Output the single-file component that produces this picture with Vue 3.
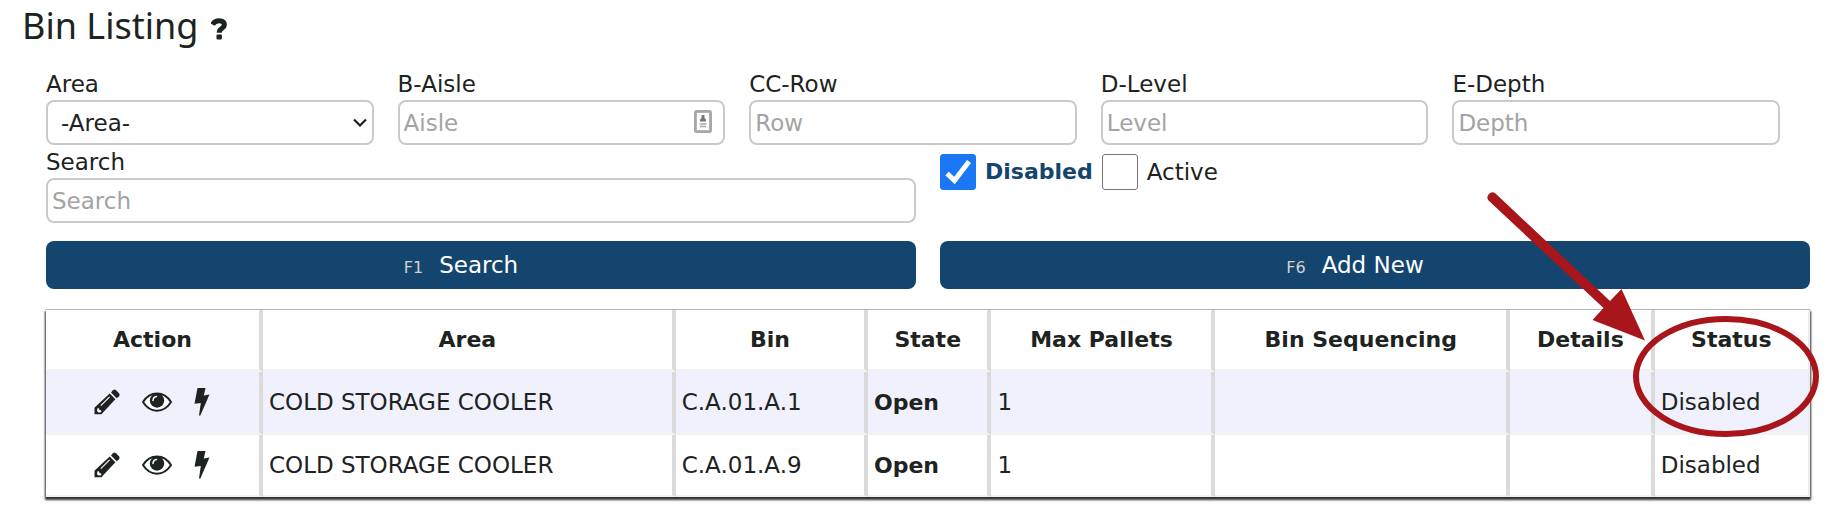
<script setup>
import { ref } from 'vue'

const area = ref('')
const showDisabled = ref(true)
const showActive = ref(false)

const filters = [
  { id: 'aisle', label: 'B-Aisle', placeholder: 'Aisle', card: true },
  { id: 'row', label: 'CC-Row', placeholder: 'Row' },
  { id: 'level', label: 'D-Level', placeholder: 'Level' },
  { id: 'depth', label: 'E-Depth', placeholder: 'Depth' }
]

const columns = ['Action', 'Area', 'Bin', 'State', 'Max Pallets', 'Bin Sequencing', 'Details', 'Status']

const bins = [
  { area: 'COLD STORAGE COOLER', bin: 'C.A.01.A.1', state: 'Open', max: 1, status: 'Disabled' },
  { area: 'COLD STORAGE COOLER', bin: 'C.A.01.A.9', state: 'Open', max: 1, status: 'Disabled' }
]
</script>

<template>
  <main class="page">
    <header class="head">
      <h1>Bin Listing</h1>
      <button type="button" class="help" aria-label="Help">
        <svg viewBox="0 0 16 22" width="16" height="22">
          <path d="M1.500 6.500C3 3.800 5 2.700 8 2.700C11.500 2.700 13.400 4.300 13.400 6.800C13.400 10.500 8.200 10.200 8.200 14.800" fill="none" stroke="currentColor" stroke-width="5" />
          <rect x="5.500" y="16.500" width="5.400" height="5" rx="1" fill="currentColor" />
        </svg>
      </button>
    </header>

    <form class="content" @submit.prevent>
      <div class="filters">
        <div class="field">
          <label for="area">Area</label>
          <div class="control">
            <select id="area" v-model="area">
              <option value="">-Area-</option>
            </select>
            <svg class="chevron" viewBox="0 0 14 9" width="14" height="9">
              <path d="M1 1.500L7 7.500L13 1.500" fill="none" stroke="#1c2321" stroke-width="2.200" />
            </svg>
          </div>
        </div>
        <div v-for="f in filters" :key="f.id" class="field">
          <label :for="f.id">{{ f.label }}</label>
          <div class="control">
            <input :id="f.id" type="text" :placeholder="f.placeholder" />
            <svg v-if="f.card" class="card" viewBox="0 0 18 23" width="18" height="23">
              <rect x="1" y="1" width="16" height="21" rx="1.500" fill="#fff" stroke="#a8a8a8" stroke-width="2" />
              <rect x="2.500" y="2.500" width="13" height="18" fill="none" stroke="#686868" stroke-dasharray="1 1" />
              <path d="M7.500 5h3v3l1.500 1.500v2h-6v-2L7.500 8z" fill="#777" />
              <path d="M5.500 14h7M6 16.500h6" stroke="#aaa" stroke-width="1.500" />
            </svg>
          </div>
        </div>
      </div>

      <div class="pair">
        <div class="field">
          <label for="search">Search</label>
          <div class="control">
            <input id="search" type="text" placeholder="Search" />
          </div>
        </div>
        <div class="checks">
          <label class="check" :class="{ on: showDisabled }">
            <input v-model="showDisabled" type="checkbox" />
            <svg v-if="showDisabled" class="tick" viewBox="0 0 36 36" width="36" height="36">
              <path d="M7 19.500L14.500 26.500L29 7.500" fill="none" stroke="#fff" stroke-width="5" />
            </svg>
            <span>Disabled</span>
          </label>
          <label class="check" :class="{ on: showActive }">
            <input v-model="showActive" type="checkbox" />
            <svg v-if="showActive" class="tick" viewBox="0 0 36 36" width="36" height="36">
              <path d="M7 19.500L14.500 26.500L29 7.500" fill="none" stroke="#fff" stroke-width="5" />
            </svg>
            <span>Active</span>
          </label>
        </div>
      </div>

      <div class="pair actions">
        <button type="submit" class="primary"><small>F1</small><span>Search</span></button>
        <button type="button" class="primary"><small>F6</small><span>Add New</span></button>
      </div>

      <table>
        <colgroup>
          <col class="c-action" /><col class="c-area" /><col class="c-bin" /><col class="c-state" />
          <col class="c-max" /><col class="c-seq" /><col class="c-details" /><col />
        </colgroup>
        <thead>
          <tr><th v-for="c in columns" :key="c" scope="col">{{ c }}</th></tr>
        </thead>
        <tbody>
          <tr v-for="b in bins" :key="b.bin">
            <td>
              <div class="tools">
                <button type="button" class="tool" aria-label="Edit">
                  <svg viewBox="0 0 26 26" width="26" height="26">
                    <path d="M2.500 16.800L15.700 4.600L21.400 10.300L9 23.500L7.500 25.300H0.500V18.800z" fill="currentColor" />
                    <path d="M17 3.400L19 1.200Q20.500 0 22 1.200L25 4.300Q26.200 5.800 25 7.200L22.700 9.200z" fill="currentColor" />
                    <path d="M3.600 19l1.400.4.500 1.600 1.600.5.300 1.200-1.200.9H4.600L3 22.200z" fill="#fff" />
                    <path d="M6.800 16.600L15.600 7.800" stroke="#fff" stroke-width="1.100" />
                  </svg>
                </button>
                <button type="button" class="tool" aria-label="View">
                  <svg viewBox="0 0 30 20" width="30" height="20">
                    <path d="M1 10C8 -1.500 22 -1.500 29 10C22 21.500 8 21.500 1 10z" fill="#fff" stroke="currentColor" stroke-width="2" />
                    <circle cx="15" cy="8.500" r="7.200" fill="currentColor" />
                    <path d="M11 8.500Q11.300 4.800 14.500 4.500" fill="none" stroke="#fff" stroke-width="1.500" stroke-linecap="round" />
                  </svg>
                </button>
                <button type="button" class="tool" aria-label="Quick action">
                  <svg viewBox="0 0 16 28" width="16" height="28">
                    <path d="M3.500 0H11.500L9.800 7.500L15.500 6.600L6.300 27.500H5L6.800 15L0.500 15.800z" fill="currentColor" />
                  </svg>
                </button>
              </div>
            </td>
            <td>{{ b.area }}</td>
            <td>{{ b.bin }}</td>
            <td><strong>{{ b.state }}</strong></td>
            <td>{{ b.max }}</td>
            <td></td>
            <td></td>
            <td>{{ b.status }}</td>
          </tr>
        </tbody>
      </table>
    </form>

    <svg class="callout" viewBox="0 0 361 260" width="361" height="260" aria-hidden="true">
      <ellipse cx="246" cy="196.500" rx="90" ry="57.500" fill="none" stroke="#a8161b" stroke-width="6" />
      <path d="M8.500 20.500A5 5 0 0 1 15.500 13.500L130 121L141.500 109L165 160.500L112.500 140L123.500 128z" fill="#a8161b" />
    </svg>
  </main>
</template>

<style>
body {
  margin: 0;
  background: #fff;
}
</style>

<style scoped>
.page {
  position: relative;
  box-sizing: border-box;
  padding: 0 31px 18px 22px;
  color: #1c2321;
  font-family: "DejaVu Sans", Verdana, sans-serif;
  font-size: 23px;
  line-height: 28px;
}
.head {
  display: flex;
  align-items: center;
  gap: 13px;
  height: 52px;
}
h1 {
  margin: 0;
  font-family: "Noto Sans", "Segoe UI", sans-serif;
  font-size: 36px;
  font-weight: 400;
  line-height: 52px;
}
button {
  font: inherit;
  cursor: pointer;
}
svg {
  display: block;
}
.help,
.tool {
  padding: 0;
  border: 0;
  background: none;
  color: inherit;
}
.help {
  padding-top: 5px;
}
.content {
  padding: 18px 0 0 24px;
}
.filters {
  display: grid;
  grid-template-columns: repeat(5, 1fr);
  gap: 24px;
  padding-right: 30px;
}
.field > label {
  display: block;
  height: 30px;
  line-height: 28px;
}
.control {
  position: relative;
}
.control input,
.control select {
  display: block;
  box-sizing: border-box;
  width: 100%;
  height: 45px;
  padding: 0 4px;
  border: 2px solid #cacaca;
  border-radius: 8px;
  background: #fff;
  color: inherit;
  font: inherit;
  appearance: none;
}
.control select {
  padding: 0 13px;
}
.control input::placeholder {
  color: #a3a3a3;
  opacity: 1;
}
.chevron {
  position: absolute;
  top: 18px;
  right: 7px;
  pointer-events: none;
}
.card {
  position: absolute;
  top: 10px;
  right: 13px;
}
.pair {
  display: grid;
  grid-template-columns: 1fr 1fr;
  gap: 24px;
  padding-top: 3px;
}
.checks {
  display: flex;
  align-items: flex-start;
  gap: 9px;
  padding-top: 6px;
}
.check {
  position: relative;
  display: flex;
  align-items: center;
  gap: 9px;
}
.check input {
  box-sizing: border-box;
  width: 36px;
  height: 36px;
  margin: 0;
  border: 1px solid #767676;
  border-radius: 3px;
  background: #fff;
  appearance: none;
}
.check input:checked {
  border-color: #1b78f5;
  background: #1b78f5;
}
.tick {
  position: absolute;
  top: 0;
  left: 0;
  pointer-events: none;
}
.check.on {
  color: #14456e;
  font-size: 22px;
  font-weight: 700;
}
.actions {
  padding-top: 18px;
}
.primary {
  display: flex;
  align-items: baseline;
  justify-content: center;
  gap: 16px;
  height: 48px;
  padding: 10px 40px 0 0;
  border: 0;
  border-radius: 8px;
  background: #14456e;
  color: #fff;
}
.primary small {
  color: #d5d0d0;
  font-size: 16px;
}
table {
  width: 100%;
  margin-top: 21px;
  border-spacing: 0;
  table-layout: fixed;
  box-shadow: 0 -1px 0 #b4b4b4, 0 2px 2px 1px #333;
}
.c-action { width: 12.3%; }
.c-area { width: 23.4%; }
.c-bin { width: 10.9%; }
.c-state { width: 7%; }
.c-max { width: 12.7%; }
.c-seq { width: 16.7%; }
.c-details { width: 8.2%; }
th,
td {
  box-sizing: border-box;
  height: 63px;
  padding: 0 6px;
  border-right: 4px solid #dadadb;
  border-bottom: 3px solid #f2f2f2;
  background: #fff;
  text-align: left;
}
th {
  height: 62px;
  font-size: 22px;
  text-align: center;
}
th:last-child,
td:last-child {
  border-right: 2px solid #ececee;
}
tbody tr:nth-child(odd) td {
  background: #f1f1fd;
}
tbody tr:last-child td {
  height: 62px;
  border-bottom-width: 2px;
}
strong {
  font-size: 22px;
}
.tools {
  display: flex;
  align-items: center;
  justify-content: center;
  gap: 22px;
}
.callout {
  position: absolute;
  top: 180px;
  right: 0;
  pointer-events: none;
}
</style>
